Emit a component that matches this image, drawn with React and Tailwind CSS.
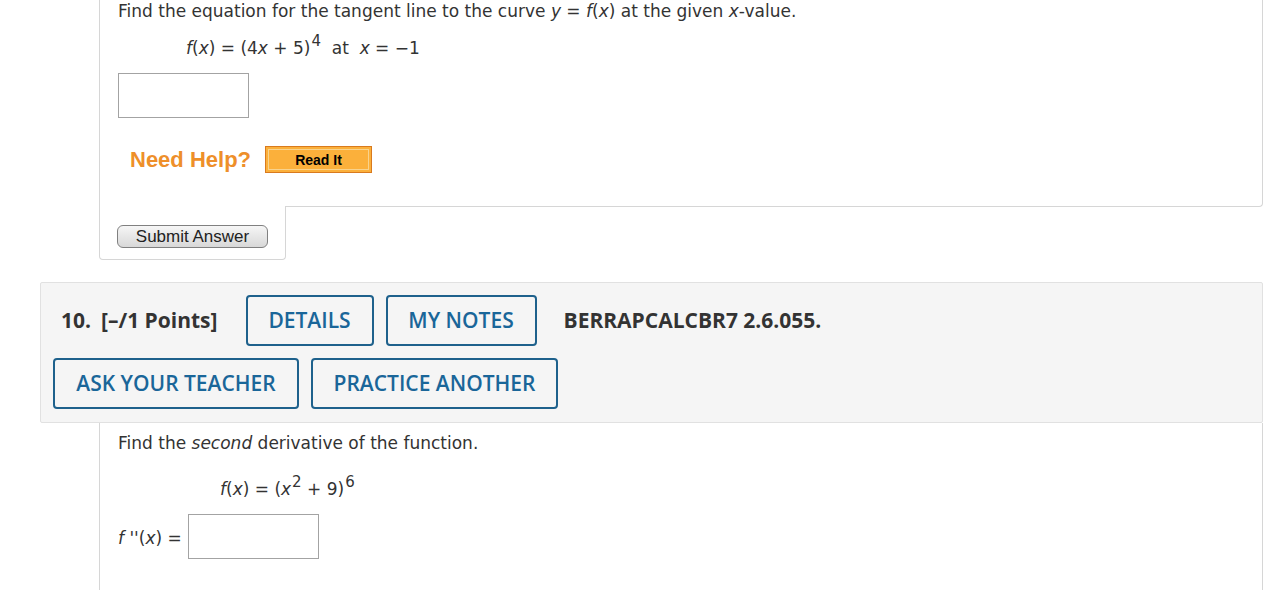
import React from "react";

const qFont = { fontFamily: '"DejaVu Sans", Verdana, sans-serif' };
const arial = { fontFamily: '"Liberation Sans", Arial, sans-serif' };

function Sup({ children }) {
  return <sup className="text-[15px] relative -top-[8px] ml-[1px]">{children}</sup>;
}

function AnswerBox() {
  return <div className="w-[131px] h-[45px] border border-[#a3a3a3] bg-white" />;
}

function TopQuestion() {
  return (
    <div className="ml-[99px] w-[1164px]">
      <div className="border-x border-b border-[#d6d6d6] rounded-br-[4px] pl-[18px] pb-[33px] text-[17px] text-[#333]" style={qFont}>
        <p className="leading-[22px]">
          Find the equation for the tangent line to the curve <i>y</i> = <i>f</i>(<i>x</i>) at the given <i>x</i>-value.
        </p>
        <p className="mt-[15px] ml-[68px] leading-[22px] whitespace-pre">
          <i>f</i>(<i>x</i>) = (4<i>x</i> + 5)<Sup>4</Sup>{"  at  "}<i>x</i> = −1
        </p>
        <div className="mt-[14px]">
          <AnswerBox />
        </div>
        <div className="mt-[28px] ml-[12px] flex items-center gap-[14px] h-[27px]">
          <span className="text-[22px] leading-none font-bold text-[#ee8f2a]" style={arial}>
            Need Help?
          </span>
          <button className="w-[107px] h-[27px] border border-[#d97a1e] bg-[#fbb03b] p-[2px]">
            <span className="flex items-center justify-center h-full border border-[#f9d38c] text-[14px] leading-none font-bold text-black" style={arial}>
              Read It
            </span>
          </button>
        </div>
      </div>
      <div className="-mt-px w-[187px] h-[54px] bg-white border-x border-b border-[#d6d6d6] rounded-b-[4px] pl-[17px] pt-[19px] flex items-start">
        <button className="w-[151px] h-[23px] rounded-[6px] border border-[#808080] bg-gradient-to-b from-[#f6f6f6] to-[#d8d8d8] text-[17px] leading-none text-[#222]" style={arial}>
          Submit Answer
        </button>
      </div>
    </div>
  );
}

function OutlineButton({ className, children }) {
  return (
    <button className={"h-[51px] rounded-[4px] border-2 border-[#1e618c] text-[21px] font-semibold text-[#1a6699] " + className}>
      {children}
    </button>
  );
}

function QuestionHeader() {
  return (
    <div className="mt-[22px] ml-[40px] w-[1223px] h-[141px] bg-[#f5f5f5] border border-[#e1e1e1] rounded-[2px] px-[12px] pt-[12px]" style={{ fontFamily: '"Open Sans", sans-serif' }}>
      <div className="flex items-center">
        <span className="ml-[8px] text-[21px] font-bold text-[#333]">10.</span>
        <span className="ml-[10px] text-[21px] font-bold text-[#333]">[–/1 Points]</span>
        <div className="ml-[28px] flex gap-[12px]">
          <OutlineButton className="w-[128px]">DETAILS</OutlineButton>
          <OutlineButton className="w-[151px]">MY NOTES</OutlineButton>
        </div>
        <span className="ml-[27px] text-[21px] font-bold text-[#333]">BERRAPCALCBR7 2.6.055.</span>
      </div>
      <div className="mt-[12px] flex gap-[12px]">
        <OutlineButton className="w-[246px]">ASK YOUR TEACHER</OutlineButton>
        <OutlineButton className="w-[247px]">PRACTICE ANOTHER</OutlineButton>
      </div>
    </div>
  );
}

function SecondQuestion() {
  return (
    <div className="ml-[99px] w-[1164px] h-[170px] border-x border-[#d6d6d6] pl-[18px] pt-[9px] text-[17px] text-[#333]" style={qFont}>
      <p className="leading-[22px]">
        Find the <i>second</i> derivative of the function.
      </p>
      <p className="mt-[24px] ml-[102px] leading-[22px]">
        <i>f</i>(<i>x</i>) = (<i>x</i><Sup>2</Sup> + 9)<Sup>6</Sup>
      </p>
      <div className="mt-[14px] flex items-center gap-[6px]">
        <span className="pt-[4px]">
          <i>f</i> ''(<i>x</i>) =
        </span>
        <AnswerBox />
      </div>
    </div>
  );
}

export default function App() {
  return (
    <div className="w-[1284px] h-[590px] overflow-hidden bg-white">
      <TopQuestion />
      <QuestionHeader />
      <SecondQuestion />
    </div>
  );
}
